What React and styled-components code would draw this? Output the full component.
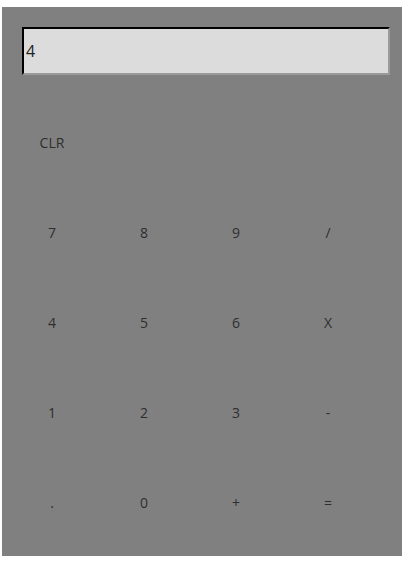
import React, { useState } from 'react';
import styled, { createGlobalStyle } from 'styled-components';

const GlobalStyle = createGlobalStyle`
  body {
    margin: 0;
    background: #ffffff;
    font-family: "Open Sans", "Noto Sans", sans-serif;
  }
`;

const Calculator = styled.div`
  box-sizing: border-box;
  width: 400px;
  margin: 7px 0 0 2px;
  padding: 20px 20px 24px 20px;
  background-color: #808080;
`;

const Display = styled.input`
  display: block;
  width: 360px;
  height: 44px;
  margin: 0 0 37px 0;
  padding: 0 2px;
  border: 2px inset #e8e8e8;
  border-top-color: #222;
  border-left-color: #222;
  border-right-color: #9a9a9a;
  border-bottom-color: #9a9a9a;
  background-color: #dcdcdc;
  color: #222;
  font-family: "Open Sans", "Noto Sans", sans-serif;
  font-size: 16px;
  outline: none;
`;

const Keys = styled.div`
  display: grid;
  grid-template-columns: repeat(4, 60px);
  grid-auto-rows: 60px;
  column-gap: 32px;
  row-gap: 30px;
`;

const Key = styled.button`
  border: none;
  background: transparent;
  color: #2e2e2e;
  font-family: "Open Sans", "Noto Sans", sans-serif;
  font-size: 14px;
  padding: 0;
  cursor: pointer;
  grid-column: ${(p) => (p.wide ? '1 / -1' : 'auto')};
  justify-self: ${(p) => (p.wide ? 'start' : 'stretch')};
  width: 60px;
`;

const rows = [
  ['7', '8', '9', '/'],
  ['4', '5', '6', 'X'],
  ['1', '2', '3', '-'],
  ['.', '0', '+', '='],
];

export default function App() {
  const [value, setValue] = useState('4');

  const press = (k) => {
    if (k === '=') {
      try {
        // eslint-disable-next-line no-new-func
        setValue(String(Function('return ' + value.replace(/X/g, '*'))()));
      } catch (e) {
        setValue('');
      }
      return;
    }
    setValue(value + k);
  };

  return (
    <>
      <GlobalStyle />
      <Calculator>
        <Display value={value} onChange={(e) => setValue(e.target.value)} />
        <Keys>
          <Key wide onClick={() => setValue('')}>CLR</Key>
          {rows.flat().map((k) => (
            <Key key={k} onClick={() => press(k)}>{k}</Key>
          ))}
        </Keys>
      </Calculator>
    </>
  );
}
